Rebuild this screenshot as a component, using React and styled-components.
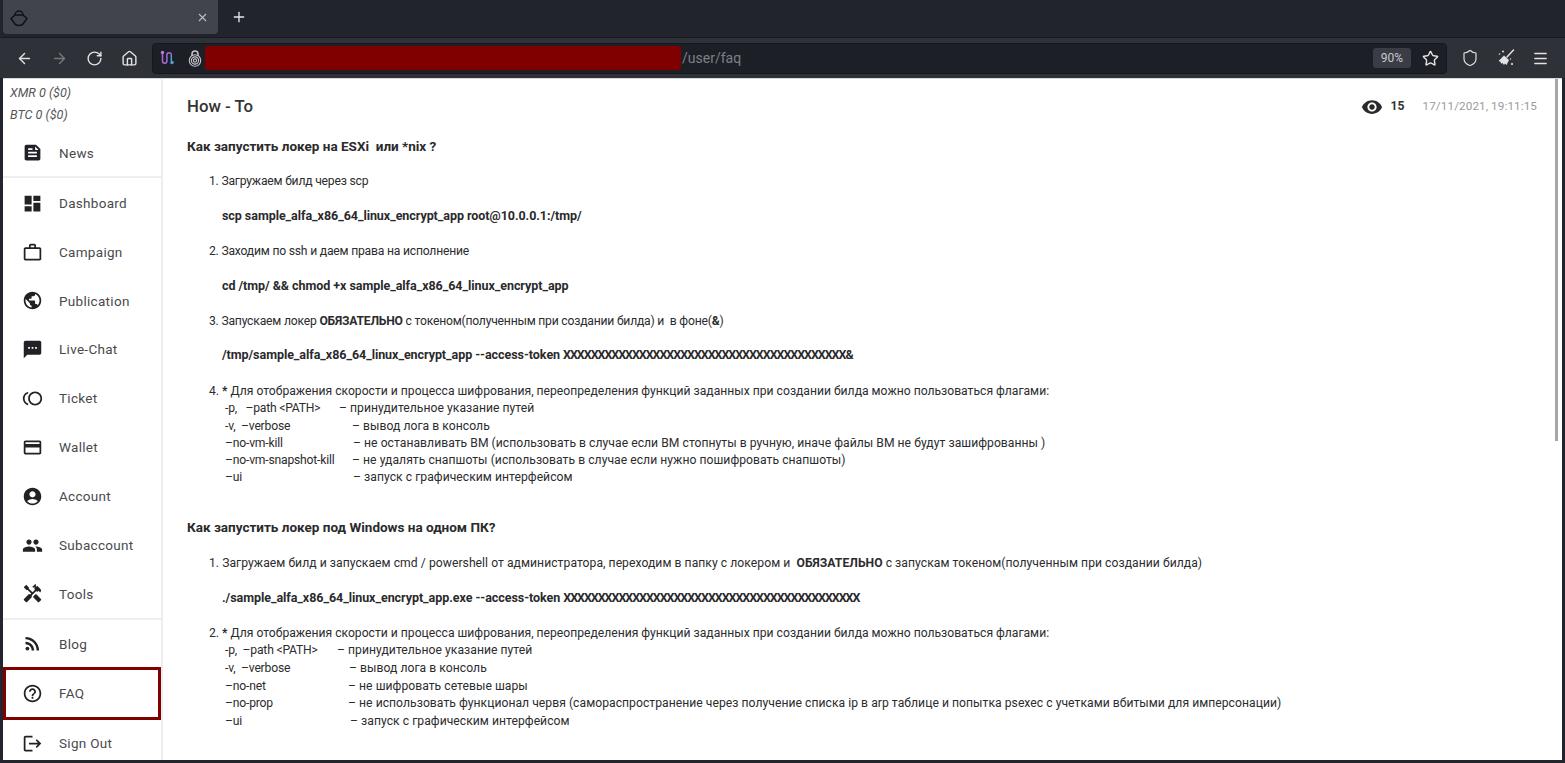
import styled, { createGlobalStyle } from 'styled-components';
import { ArrowLeft, ArrowRight, RotateCw, Home, Star, Shield, Menu, X, Plus } from 'lucide-react';
import {
  MdFeed,
  MdDashboard,
  MdOutlineWorkOutline,
  MdPublic,
  MdSms,
  MdOutlineToll,
  MdCreditCard,
  MdAccountCircle,
  MdPeople,
  MdHandyman,
  MdRssFeed,
  MdHelpOutline,
  MdLogout,
  MdVisibility,
} from 'react-icons/md';

const GlobalStyle = createGlobalStyle`
  html, body {
    margin: 0;
    height: 100%;
    overflow: hidden;
    background: #23252e;
  }
  * {
    box-sizing: border-box;
  }
`;

const Window = styled.div`
  width: 1565px;
  height: 763px;
  display: flex;
  flex-direction: column;
  background: #23252e;
  font-family: Roboto, "Liberation Sans", sans-serif;
`;

const TabBar = styled.div`
  height: 38px;
  display: flex;
  align-items: flex-start;
  background: #22242d;
  border-bottom: 1px solid #191a21;
  color: #e6e6e8;
`;

const Tab = styled.div`
  width: 215px;
  height: 34px;
  margin-left: 3px;
  padding: 0 9px 0 7px;
  display: flex;
  align-items: center;
  justify-content: space-between;
  background: #42444d;
  border-radius: 0 0 4px 4px;
`;

const NewTab = styled.div`
  width: 42px;
  height: 34px;
  display: flex;
  align-items: center;
  justify-content: center;
`;

const Toolbar = styled.div`
  height: 40px;
  display: flex;
  align-items: center;
  background: #2f3138;
  color: #e2e2e4;
`;

const NavButtons = styled.div`
  width: 152px;
  padding-left: 16px;
  display: flex;
  align-items: center;
  gap: 18px;
`;

const UrlBar = styled.div`
  width: 1295px;
  height: 31px;
  padding: 0 7px;
  display: flex;
  align-items: center;
  background: #1d1f27;
  border: 1px solid #17181e;
  border-radius: 4px;
`;

const UrlIcons = styled.div`
  display: flex;
  align-items: center;
  gap: 13px;
`;

const Redacted = styled.div`
  width: 476px;
  height: 24px;
  margin-left: 3px;
  background: #800000;
  border-radius: 3px;
`;

const UrlPath = styled.span`
  flex: 1;
  margin-left: 1px;
  font-size: 14px;
  color: #7d7f86;
`;

const Zoom = styled.span`
  width: 38px;
  height: 20px;
  margin-right: 11px;
  display: flex;
  align-items: center;
  justify-content: center;
  background: #3a3c46;
  border-radius: 3px;
  font-size: 12px;
  color: #c9cacd;
`;

const ToolIcons = styled.div`
  flex: 1;
  padding-left: 14px;
  display: flex;
  align-items: center;
  gap: 17.5px;
`;

const Viewport = styled.div`
  flex: 1;
  min-height: 0;
  margin: 0 3px 3px;
  display: flex;
  overflow: hidden;
  background: #fff;
  border-top: 1px solid #d8d8da;
`;

const Sidebar = styled.aside`
  width: 160px;
  flex-shrink: 0;
  border-right: 2px solid #eeeeee;
  overflow: hidden;
`;

const Balances = styled.div`
  height: 50px;
  padding: 3px 0 0 7px;
  font-size: 12.6px;
  font-style: italic;
  line-height: 22px;
  color: #55565a;
`;

const NavItem = styled.div`
  height: ${(p) => p.$height || 49}px;
  padding-left: 18.5px;
  display: flex;
  align-items: center;
  gap: 16.5px;
  font-size: 13.5px;
  letter-spacing: 0.3px;
  color: #4a4a4d;
  border-bottom: ${(p) => (p.$divider ? '2px solid #eeeeee' : 'none')};

  svg {
    flex-shrink: 0;
    color: #222226;
  }
`;

const FaqItem = styled(NavItem)`
  position: relative;
  margin: -1px 0 -1px;
  padding-left: 15.5px;
  border: 3px solid #800000;
`;

const Content = styled.main`
  flex: 1;
  min-width: 0;
  display: flex;
`;

const Article = styled.article`
  flex: 1;
  min-width: 0;
  padding: 0 0 0 24px;
  font-size: 12.15px;
  line-height: 17.2px;
  color: #2c2c2e;
`;

const ArticleHead = styled.header`
  height: 58px;
  padding: 0 18px 3px 0;
  display: flex;
  align-items: center;
  justify-content: space-between;
`;

const PageTitle = styled.h1`
  margin: 0;
  font-size: 16.8px;
  font-weight: 500;
  color: #333336;
`;

const Meta = styled.div`
  display: flex;
  align-items: center;
  font-size: 11.7px;
  letter-spacing: 0.1px;
  color: #9a9a9d;
`;

const Views = styled.b`
  margin: 0 18px 0 7px;
  font-size: 12.15px;
  font-weight: 700;
  color: #333336;
`;

const SectionTitle = styled.h2`
  margin: ${(p) => p.$top || 0}px 0 0;
  font-size: 13.5px;
  font-weight: 700;
  line-height: 18px;
  white-space: pre-wrap;
  color: #2a2a2c;
`;

const Step = styled.p`
  margin: ${(p) => p.$top}px 0 0 22px;
  line-height: 18px;
  white-space: pre-wrap;
  letter-spacing: ${(p) => p.$track || 0}px;
`;

const Command = styled.p`
  margin: 16.8px 0 0 35px;
  font-size: 12.5px;
  font-weight: 700;
  line-height: 18px;
  letter-spacing: -0.05px;
  color: #2a2a2c;
`;

const Token = styled.span`
  letter-spacing: -1.05px;
`;

const Option = styled.div`
  margin-left: 38px;
  display: flex;
  line-height: ${(p) => p.$line}px;
  white-space: pre;
  letter-spacing: 0.04px;
`;

const Flag = styled.span`
  width: ${(p) => p.$width}px;
  flex-shrink: 0;
  letter-spacing: -0.2px;
`;

const Scrollbar = styled.div`
  width: 3px;
  height: 362px;
  margin: 0 4px 0 0;
  flex-shrink: 0;
  background: #a7a7a9;
`;

const TabLogo = () => (
  <svg width="18" height="19" viewBox="0 0 18 19" fill="none" stroke="#101015" strokeWidth="1.5" strokeLinejoin="round">
    <path d="M5 7a4 4 0 0 1 8 0" />
    <path d="M5 7h8l4 3.5-4.4 6q-3.6 2-7.2 0L1 10.500z" />
  </svg>
);

const RouteIcon = () => (
  <svg width="15" height="16" viewBox="0 0 15 16" fill="none" strokeWidth="1.5">
    <path d="M2.500 3v8a2.200 2.200 0 0 0 4.400 0V5a2.200 2.200 0 0 1 4.400 0" stroke="#a56ad8" />
    <path d="M11.300 5v6" stroke="#4f9fd4" />
    <circle cx="2.500" cy="2.500" r="1.700" fill="#b57be0" stroke="none" />
    <circle cx="12" cy="12.500" r="1.800" fill="#4f9fd4" stroke="none" />
  </svg>
);

const LockIcon = () => (
  <svg width="14" height="17" viewBox="0 0 14 17" fill="none" stroke="#c8c8ca" strokeWidth="1.1">
    <path d="M4 6V4a3 3 0 0 1 6 0v2" strokeWidth="1.5" />
    <circle cx="7" cy="10.500" r="5.700" />
    <circle cx="7" cy="10.500" r="3.600" />
    <circle cx="7" cy="10.500" r="1.600" />
  </svg>
);

const BroomIcon = () => (
  <svg width="18" height="18" viewBox="0 0 18 18" fill="#e2e2e4">
    <path d="M16.500 1 10 8" stroke="#e2e2e4" strokeWidth="1.500" strokeLinecap="round" />
    <path d="M7 6.500 12 11l-2.500 5-1.500-1.500-1 1.500-1.500-2-1 .8-1.500-2.300-1.500-.5z" />
    <circle cx="6" cy="2.500" r="1" />
    <circle cx="2.500" cy="5" r=".8" />
    <circle cx="15" cy="15" r="1.100" />
    <circle cx="13.500" cy="10" r=".7" />
  </svg>
);

const navTop = [
  { label: 'News', Icon: MdFeed, height: 49, divider: true },
  { label: 'Dashboard', Icon: MdDashboard, height: 50 },
  { label: 'Campaign', Icon: MdOutlineWorkOutline, height: 48 },
  { label: 'Publication', Icon: MdPublic },
  { label: 'Live-Chat', Icon: MdSms, height: 48.5 },
  { label: 'Ticket', Icon: MdOutlineToll },
  { label: 'Wallet', Icon: MdCreditCard },
  { label: 'Account', Icon: MdAccountCircle },
  { label: 'Subaccount', Icon: MdPeople },
  { label: 'Tools', Icon: MdHandyman, height: 50, divider: true },
  { label: 'Blog', Icon: MdRssFeed, height: 48 },
];

const optionsLinux = [
  ['-p,   –path <PATH>', 114, '– принудительное указание путей'],
  ['-v,  –verbose', 127, '– вывод лога в консоль'],
  ['–no-vm-kill', 128, '– не останавливать ВМ (использовать в случае если ВМ стопнуты в ручную, иначе файлы ВМ не будут зашифрованны )'],
  ['–no-vm-snapshot-kill', 127, '– не удалять снапшоты (использовать в случае если нужно пошифровать снапшоты)'],
  ['–ui', 128, '– запуск с графическим интерфейсом'],
];

const optionsWindows = [
  ['-p,  –path <PATH>', 112, '– принудительное указание путей'],
  ['-v,  –verbose', 124, '– вывод лога в консоль'],
  ['–no-net', 123, '– не шифровать сетевые шары'],
  ['–no-prop', 123, '– не использовать функционал червя (самораспространение через получение списка ip в arp таблице и попытка psexec с учетками вбитыми для имперсонации)'],
  ['–ui', 125, '– запуск с графическим интерфейсом'],
];

function OptionList({ rows, line }) {
  return rows.map(([flag, width, text]) => (
    <Option key={flag} $line={line}>
      <Flag $width={width}>{flag}</Flag>
      {text}
    </Option>
  ));
}

export default function App() {
  return (
    <Window>
      <GlobalStyle />
      <TabBar>
        <Tab>
          <TabLogo />
          <X size={13} color="#bdbec2" />
        </Tab>
        <NewTab>
          <Plus size={16} />
        </NewTab>
      </TabBar>
      <Toolbar>
        <NavButtons>
          <ArrowLeft size={17} />
          <ArrowRight size={17} color="#77787d" />
          <RotateCw size={17} />
          <Home size={17} />
        </NavButtons>
        <UrlBar>
          <UrlIcons>
            <RouteIcon />
            <LockIcon />
          </UrlIcons>
          <Redacted />
          <UrlPath>/user/faq</UrlPath>
          <Zoom>90%</Zoom>
          <Star size={17} />
        </UrlBar>
        <ToolIcons>
          <Shield size={18} strokeWidth={1.6} />
          <BroomIcon />
          <Menu size={17} />
        </ToolIcons>
      </Toolbar>
      <Viewport>
        <Sidebar>
          <Balances>
            XMR 0 ($0)
            <br />
            BTC 0 ($0)
          </Balances>
          {navTop.map(({ label, Icon, height, divider }) => (
            <NavItem key={label} $height={height} $divider={divider}>
              <Icon size={21} />
              {label}
            </NavItem>
          ))}
          <FaqItem $height={53}>
            <MdHelpOutline size={21} />
            FAQ
          </FaqItem>
          <NavItem>
            <MdLogout size={21} />
            Sign Out
          </NavItem>
        </Sidebar>
        <Content>
          <Article>
            <ArticleHead>
              <PageTitle>How - To</PageTitle>
              <Meta>
                <MdVisibility size={22} color="#2a2a2c" />
                <Views>15</Views>
                17/11/2021, 19:11:15
              </Meta>
            </ArticleHead>
            <SectionTitle>Как запустить локер на ESXi  или *nix ?</SectionTitle>
            <Step $top={17} $track={-0.2}>1. Загружаем билд через scp</Step>
            <Command>scp sample_alfa_x86_64_linux_encrypt_app root@10.0.0.1:/tmp/</Command>
            <Step $top={17} $track={-0.2}>2. Заходим по ssh и даем права на исполнение</Step>
            <Command>cd /tmp/ &amp;&amp; chmod +x sample_alfa_x86_64_linux_encrypt_app</Command>
            <Step $top={17} $track={-0.2}>
              3. Запускаем локер <b>ОБЯЗАТЕЛЬНО</b> с токеном(полученным при создании билда) и  в фоне(<b>&amp;</b>)
            </Step>
            <Command>/tmp/sample_alfa_x86_64_linux_encrypt_app --access-token <Token>{'X'.repeat(41)}</Token>&amp;</Command>
            <Step $top={18}>
              4. <b>*</b> Для отображения скорости и процесса шифрования, переопределения функций заданных при создании билда можно пользоваться флагами:
            </Step>
            <OptionList rows={optionsLinux} line={17.2} />
            <SectionTitle $top={32}>Как запустить локер под Windows на одном ПК?</SectionTitle>
            <Step $top={18} $track={0.05}>
              1. Загружаем билд и запускаем cmd / powershell от администратора, переходим в папку с локером и  <b>ОБЯЗАТЕЛЬНО</b> с запускам токеном(полученным при создании билда)
            </Step>
            <Command>./sample_alfa_x86_64_linux_encrypt_app.exe --access-token <Token>{'X'.repeat(43)}</Token></Command>
            <Step $top={17}>
              2. <b>*</b> Для отображения скорости и процесса шифрования, переопределения функций заданных при создании билда можно пользоваться флагами:
            </Step>
            <OptionList rows={optionsWindows} line={17.7} />
          </Article>
          <Scrollbar />
        </Content>
      </Viewport>
    </Window>
  );
}
